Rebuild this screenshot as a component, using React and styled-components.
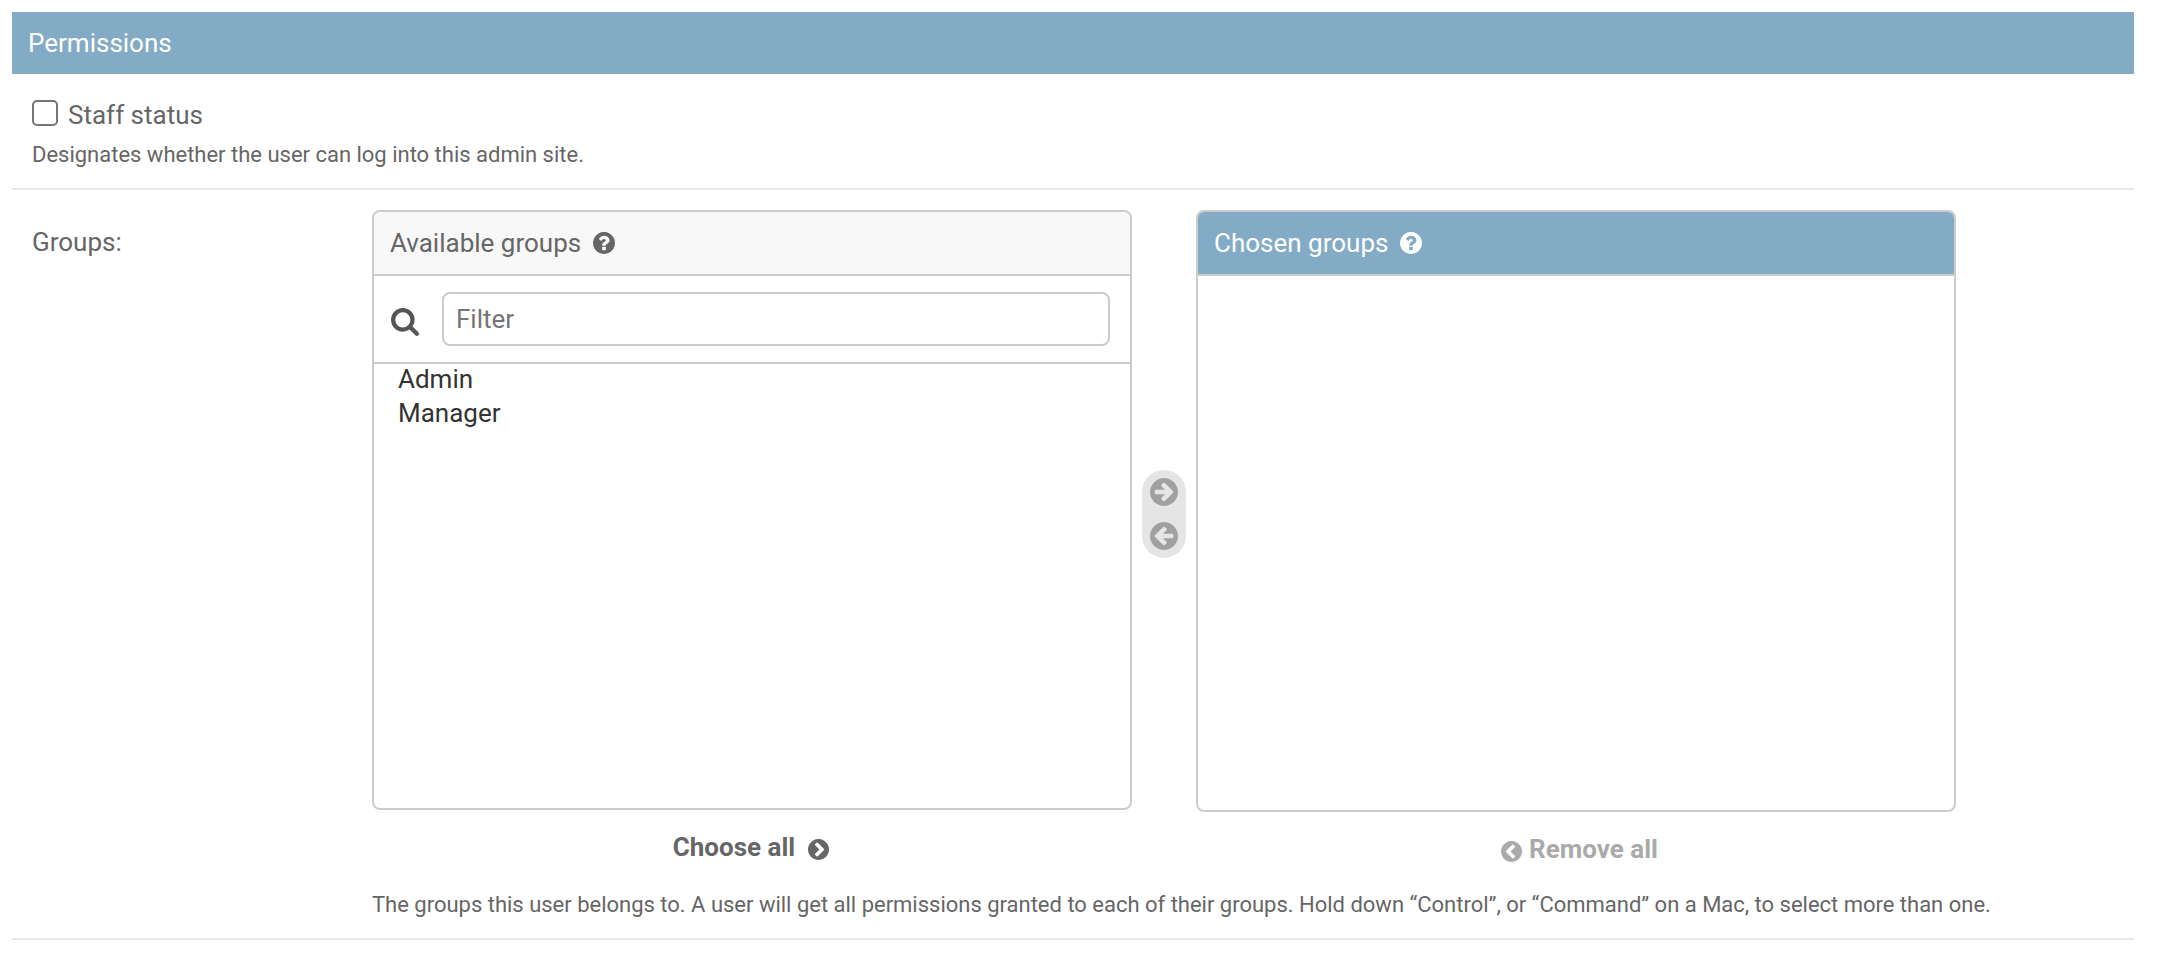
import React from "react";
import styled, { createGlobalStyle } from "styled-components";

const GlobalStyle = createGlobalStyle`
  *, *::before, *::after { box-sizing: border-box; }
  body {
    margin: 0;
    background: #fff;
    color: #666;
    font-family: Roboto, "Liberation Sans", sans-serif;
    font-size: 26px;
    -webkit-font-smoothing: antialiased;
  }
`;

const Module = styled.section`
  margin: 12px 34px 0 12px;
`;

const ModuleTitle = styled.h2`
  margin: 0;
  height: 62px;
  padding: 0 16px;
  background: #84abc5;
  color: #fff;
  font-size: 26px;
  font-weight: 400;
  line-height: 62px;
`;

const FormRow = styled.div`
  display: flex;
  flex-direction: ${(p) => (p.$stacked ? "column" : "row")};
  height: ${(p) => p.$height}px;
  padding: 20px 20px 0;
  border-bottom: 2px solid #e8e8e8;
`;

const CheckLabel = styled.label`
  display: flex;
  align-items: flex-start;
  gap: 10px;
  height: 44px;
  padding-top: 6px;
  line-height: 30px;
`;

const Checkbox = styled.input`
  appearance: none;
  width: 26px;
  height: 26px;
  margin: 0;
  border: 2px solid #767676;
  border-radius: 5px;
  background: #fff;
`;

const Help = styled.p`
  margin: 0;
  font-size: 22px;
  line-height: 34px;
  letter-spacing: -0.008px;
  white-space: nowrap;
`;

const FieldLabel = styled.label`
  flex: none;
  width: 340px;
  padding-top: 17px;
  line-height: 30px;
`;

const Selector = styled.div`
  display: flex;
  align-items: flex-start;
  height: 678px;
`;

const Column = styled.div`
  width: 760px;
`;

const Panel = styled.div`
  height: ${(p) => p.$height}px;
  border: 2px solid #ccc;
  border-radius: 8px;
  overflow: hidden;
`;

const PanelTitle = styled.h3`
  display: flex;
  align-items: center;
  gap: 12px;
  margin: 0;
  height: 64px;
  padding: 0 16px;
  border-bottom: 2px solid #ccc;
  background: ${(p) => (p.$active ? "#84abc5" : "#f8f8f8")};
  color: ${(p) => (p.$active ? "#fff" : "#666")};
  font-size: 26px;
  font-weight: 400;
`;

const FilterBar = styled.div`
  display: flex;
  align-items: center;
  gap: 23px;
  height: 88px;
  padding: 0 20px 0 17px;
  border-bottom: 2px solid #ccc;
  color: #555;
`;

const FilterInput = styled.input`
  flex: 1;
  height: 54px;
  padding: 0 12px;
  border: 2px solid #ccc;
  border-radius: 8px;
  outline: none;
  color: #333;
  font: inherit;
  &::placeholder { color: #757575; opacity: 1; }
`;

const Options = styled.ul`
  margin: -2px 0 0;
  padding: 0 24px;
  list-style: none;
  color: #333;
  line-height: 34px;
`;

const Chooser = styled.div`
  display: flex;
  flex-direction: column;
  align-items: center;
  gap: 16px;
  width: 44px;
  height: 88px;
  margin: 260px 10px 0;
  padding-top: 8px;
  border-radius: 22px;
  background: #e5e5e5;
  color: #a0a0a0;
`;

const BulkAction = styled.a`
  display: flex;
  align-items: center;
  justify-content: center;
  gap: ${(p) => (p.$muted ? 7 : 13)}px;
  height: 30px;
  margin-top: 22px;
  padding-left: ${(p) => (p.$muted ? 7 : 0)}px;
  padding-right: ${(p) => (p.$muted ? 0 : 2)}px;
  color: ${(p) => (p.$muted ? "#aaa" : "#666")};
  font-weight: 700;
  line-height: 30px;
  svg { margin-top: 5px; }
`;

const Glyph = styled.svg`
  flex: none;
  width: ${(p) => p.$size}px;
  height: ${(p) => p.$size}px;
  margin-top: ${(p) => p.$drop || 0}px;
  fill: currentColor;
  fill-rule: evenodd;
  transform: ${(p) => (p.$flip ? "scaleX(-1)" : "none")};
`;

const DISC =
  "M1664 896q0 209-103 385.5t-279.5 279.5-385.5 103-385.5-103-279.5-279.5-103-385.5 103-385.5 279.5-279.5 385.5-103 385.5 103 279.5 279.5 103 385.5z";
const QUESTION =
  "M1024 1376v-192q0-14-9-23t-23-9h-192q-14 0-23 9t-9 23v192q0 14 9 23t23 9h192q14 0 23-9t9-23zM1280 704q0-88-55.5-163t-138.5-116-170-41q-243 0-371 213-15 24 8 42l132 100q7 6 19 6 16 0 25-12 53-68 86-92 34-24 86-24 48 0 85.5 26t37.5 59q0 38-20 61t-68 45q-63 28-115.5 86.5t-52.5 125.5v36q0 14 9 23t23 9h192q14 0 23-9t9-23q0-19 21.5-49.5t54.5-49.5q32-18 49-28.5t46-35 44.5-48 28-60.5 12.5-81z";
const ARROW =
  "M1413 896q0-27-18-45l-91-91-362-362q-18-18-45-18t-45 18l-91 91q-18 18-18 45t18 45l189 189h-502q-26 0-45 19t-19 45v128q0 26 19 45t45 19h502l-189 189q-19 19-19 45t19 45l91 91q18 18 45 18t45-18l362-362 91-91q18-18 18-45z";
const CHEVRON =
  "M845 1395l454-454q19-19 19-45t-19-45l-454-454q-19-19-45-19t-45 19l-102 102q-19 19-19 45t19 45l307 307-307 307q-19 19-19 45t19 45l102 102q19 19 45 19t45-19z";
const SEARCH =
  "M1216 832q0-185-131.5-316.5t-316.5-131.5-316.5 131.5-131.5 316.5 131.5 316.5 316.5 131.5 316.5-131.5 131.5-316.5zm512 832q0 52-38 90t-90 38q-54 0-90-38l-343-342q-179 124-399 124-143 0-273.5-55.5t-225-150-150-225-55.5-273.5 55.5-273.5 150-225 225-150 273.5-55.5 273.5 55.5 225 150 150 225 55.5 273.5q0 220-124 399l343 343q37 37 37 90z";

const DiscIcon = ({ shape, size, flip }) => (
  <Glyph viewBox="128 128 1536 1536" $size={size} $flip={flip} aria-hidden="true">
    <path d={DISC + shape} />
  </Glyph>
);

const SearchIcon = () => (
  <Glyph viewBox="64 128 1664 1664" $size={28} $drop={6} aria-hidden="true">
    <path d={SEARCH} />
  </Glyph>
);

export default function App() {
  return (
    <>
      <GlobalStyle />
      <Module>
        <ModuleTitle>Permissions</ModuleTitle>
        <FormRow $stacked $height={116}>
          <CheckLabel>
            <Checkbox type="checkbox" />
            Staff status
          </CheckLabel>
          <Help>Designates whether the user can log into this admin site.</Help>
        </FormRow>
        <FormRow $height={750}>
          <FieldLabel>Groups:</FieldLabel>
          <div>
            <Selector>
              <Column>
                <Panel $height={600}>
                  <PanelTitle>
                    Available groups
                    <DiscIcon shape={QUESTION} size={22} />
                  </PanelTitle>
                  <FilterBar>
                    <SearchIcon />
                    <FilterInput placeholder="Filter" />
                  </FilterBar>
                  <Options>
                    <li>Admin</li>
                    <li>Manager</li>
                  </Options>
                </Panel>
                <BulkAction>
                  Choose all
                  <DiscIcon shape={CHEVRON} size={21} />
                </BulkAction>
              </Column>
              <Chooser>
                <DiscIcon shape={ARROW} size={28} />
                <DiscIcon shape={ARROW} size={28} flip />
              </Chooser>
              <Column>
                <Panel $height={602}>
                  <PanelTitle $active>
                    Chosen groups
                    <DiscIcon shape={QUESTION} size={22} />
                  </PanelTitle>
                </Panel>
                <BulkAction $muted>
                  <DiscIcon shape={CHEVRON} size={21} flip />
                  Remove all
                </BulkAction>
              </Column>
            </Selector>
            <Help>
              The groups this user belongs to. A user will get all permissions granted to each of their groups. Hold
              down “Control”, or “Command” on a Mac, to select more than one.
            </Help>
          </div>
        </FormRow>
      </Module>
    </>
  );
}
